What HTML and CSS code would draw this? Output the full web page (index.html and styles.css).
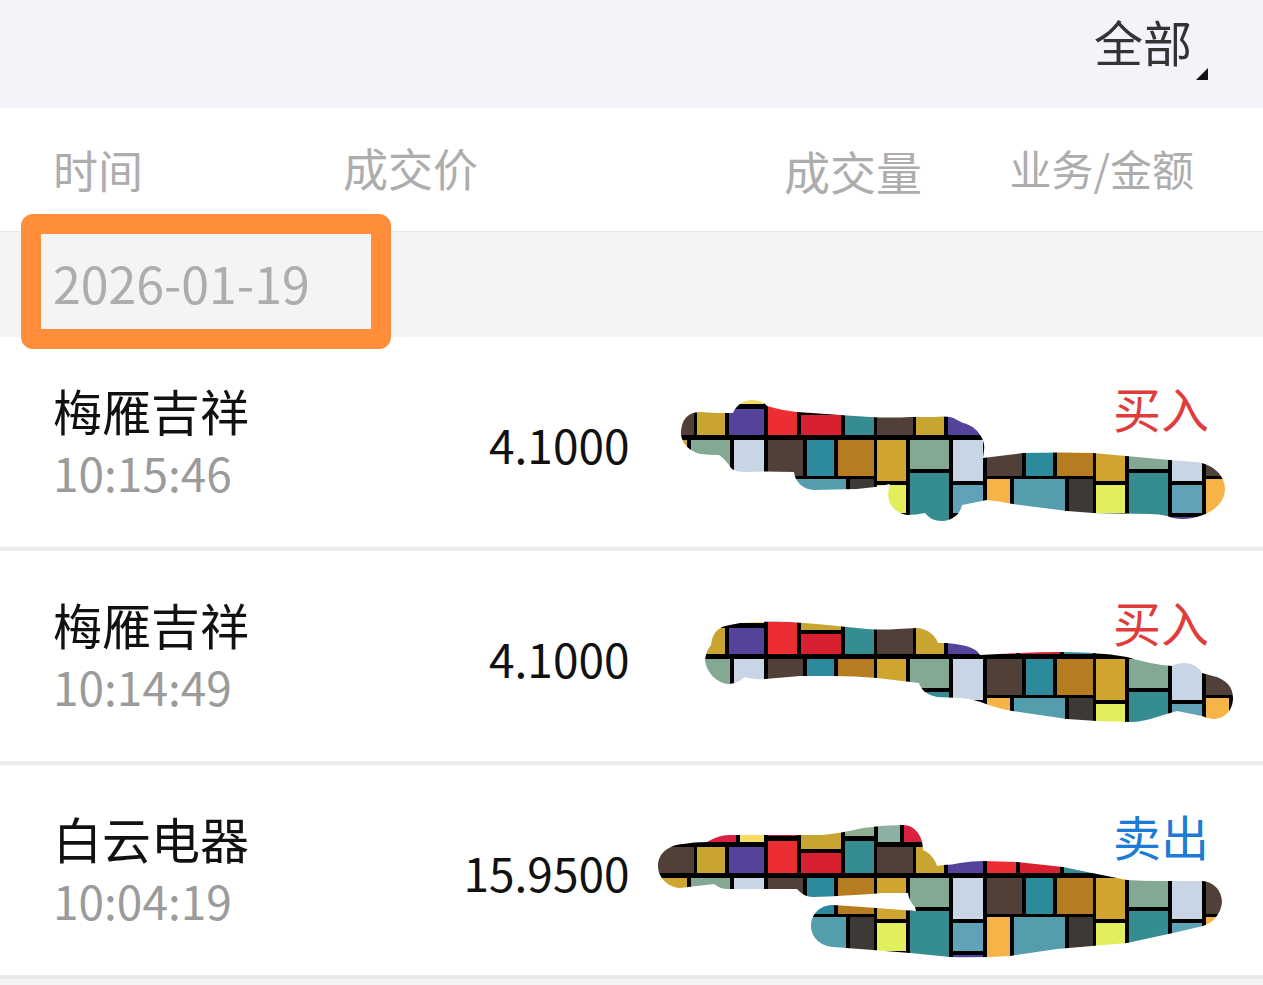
FILE: index.html
```html
<!DOCTYPE html>
<html lang="zh-CN">
<head>
<meta charset="utf-8">
<meta name="viewport" content="width=device-width, initial-scale=1">
<title>成交记录</title>
<link rel="stylesheet" href="styles.css">
</head>
<body>
<header class="topbar">
  <label class="filter">
    <select class="filter-select" aria-label="筛选">
      <option>全部</option>
    </select>
    <svg class="filter-mark" viewBox="0 0 12 12" aria-hidden="true"><path d="M12 0V12H0Z"/></svg>
  </label>
</header>

<svg class="defs" aria-hidden="true">
  <defs>
    <pattern id="mosaic" patternUnits="userSpaceOnUse" x="657" y="377" width="219" height="219">
      <rect width="219" height="219" fill="#000"/>
      <rect x="2" y="0" width="22" height="27" fill="#8cb0a1"/>
      <rect x="28" y="0" width="51" height="27" fill="#db2140"/>
      <rect x="83" y="0" width="24" height="27" fill="#f2dc66"/>
      <rect x="111" y="0" width="29" height="21" fill="#b81f3c"/>
      <rect x="144" y="0" width="40" height="34" fill="#c8a431"/>
      <rect x="188" y="0" width="29" height="21" fill="#8fae90"/>
      <rect x="1" y="32" width="36" height="26" fill="#504038"/>
      <rect x="40" y="32" width="28" height="26" fill="#c8a431"/>
      <rect x="72" y="32" width="35" height="26" fill="#54429b"/>
      <rect x="111" y="26" width="29" height="32" fill="#ec2e33"/>
      <rect x="144" y="38" width="40" height="20" fill="#d92030"/>
      <rect x="188" y="26" width="29" height="32" fill="#358d92"/>
      <rect x="1" y="63" width="29" height="41" fill="#cfa52f"/>
      <rect x="34" y="63" width="39" height="29" fill="#83a893"/>
      <rect x="77" y="63" width="30" height="41" fill="#c8d5e4"/>
      <rect x="111" y="63" width="35" height="36" fill="#504038"/>
      <rect x="150" y="63" width="27" height="36" fill="#2d899c"/>
      <rect x="181" y="63" width="36" height="36" fill="#b57d20"/>
      <rect x="1" y="108" width="29" height="28" fill="#e2ee5b"/>
      <rect x="34" y="96" width="39" height="60" fill="#358d92"/>
      <rect x="77" y="108" width="30" height="28" fill="#60a3b8"/>
      <rect x="77" y="140" width="30" height="20" fill="#54429b"/>
      <rect x="111" y="102" width="23" height="58" fill="#f6b347"/>
      <rect x="138" y="102" width="51" height="58" fill="#549dac"/>
      <rect x="193" y="102" width="24" height="58" fill="#3f3936"/>
    </pattern>
  </defs>
</svg>

<table class="trades">
  <colgroup>
    <col class="col-time"><col class="col-price"><col class="col-volume"><col class="col-kind">
  </colgroup>
  <thead>
    <tr>
      <th class="head-time" scope="col">时间</th>
      <th class="head-price" scope="col">成交价</th>
      <th class="head-volume" scope="col">成交量</th>
      <th class="head-kind" scope="col">业务/金额</th>
    </tr>
  </thead>
  <tbody>
    <tr>
      <th class="date" colspan="4" scope="rowgroup">2026-01-19<span class="date-frame"></span></th>
    </tr>
    <tr class="trade">
      <td class="stock"><div class="name">梅雁吉祥</div><div class="time">10:15:46</div></td>
      <td class="price">4.1000</td>
      <td></td>
      <td class="kind buy">买入
        <svg class="mask" viewBox="650 337 590 214" aria-hidden="true"><path fill="url(#mosaic)" d="M681 433C681 421 687 412 700 412C710 413 722 413 733 413C737 404 744 400 752 400C759 400 764 402 767 406C777 409 787 411 797 412L840 415L870 417Q890 418 910 417H933Q945 416 950 417C955 418 958 421 963 423C977 426 986 440 984 450L983 458L1023 453Q1058 452 1093 453L1170 460L1195 462C1212 463 1225 475 1225 489C1225 502 1214 511 1203 515C1189 520 1177 520 1167 516Q1159 514 1150 514L1093 513L1067 511L1013 504Q998 501 987 500L962 505C961 512 954 521 942 521C934 521 929 518 925 513Q917 515 907 515C890 512 885 498 890 484Q874 488 857 489L813 490C803 489 795 482 794 472Q763 471 746 472C739 472 734 471 731 468Q726 460 719 455Q709 455 700 454C690 451 681 444 681 433Z"/></svg>
      </td>
    </tr>
    <tr class="trade">
      <td class="stock"><div class="name">梅雁吉祥</div><div class="time">10:14:49</div></td>
      <td class="price">4.1000</td>
      <td></td>
      <td class="kind buy">买入
        <svg class="mask" viewBox="650 551 590 214" aria-hidden="true"><path fill="url(#mosaic)" d="M705 660Q706 651 711 645C712 635 717 628 725 626L740 623Q765 621 790 622L817 624L867 629Q883 630 897 629L917 628C928 629 935 635 938 643L947 643Q957 644 966 646Q977 649 980 655L1020 653Q1058 651 1093 653Q1111 654 1127 657Q1149 664 1172 666C1181 661 1196 662 1202 673L1213 676C1226 679 1233 687 1233 698C1233 710 1225 719 1213 719Q1208 719 1202 716L1177 711L1160 716Q1143 722 1130 722L1097 721L1067 719L1012 711Q997 708 986 704Q974 699 960 698L937 697C927 695 921 690 919 683L877 678Q855 676 833 676H800L765 679Q753 680 745 677Q737 684 728 684C717 683 706 672 705 660Z"/></svg>
      </td>
    </tr>
    <tr class="trade">
      <td class="stock"><div class="name">白云电器</div><div class="time">10:04:19</div></td>
      <td class="price">15.9500</td>
      <td></td>
      <td class="kind sell">卖出
        <svg class="mask" viewBox="650 765 590 214" aria-hidden="true"><path fill="url(#mosaic)" d="M658 866C658 853 669 845 683 844Q694 842 707 842C714 838 721 835 730 835H823Q842 833 863 828Q883 825 903 825C915 825 923 836 923 850C930 853 935 859 937 866L943 865Q952 865 960 863Q972 861 983 861L1017 862L1063 867L1097 874L1127 880Q1142 881 1157 881H1203C1214 882 1222 891 1222 902C1221 914 1213 923 1203 926L1173 933L1127 943L1057 949L1010 956Q979 958 950 957L910 953L873 950L833 947C820 946 811 937 811 926C811 914 820 905 833 905L863 907L916 911L915 907Q909 901 908 893L883 893Q843 896 813 897C805 897 801 893 797 889H728C722 889 718 887 714 884L680 888C667 887 658 877 658 866Z"/></svg>
      </td>
    </tr>
  </tbody>
</table>
</body>
</html>
```
FILE: styles.css
```css
* {
  box-sizing: border-box;
}

body {
  margin: 0;
  background: #f4f4f4;
  font-family: "Noto Sans CJK SC", sans-serif;
  color: #111;
}

.topbar {
  display: flex;
  justify-content: flex-end;
  height: 108px;
  padding: 5px 55px 0 0;
  background: #f3f4f9;
}

.filter {
  position: relative;
  height: 75px;
  padding-right: 15px;
}

.filter-select {
  appearance: none;
  height: 72px;
  padding: 0;
  border: 0;
  background: none;
  color: #333;
  font: 400 49px/72px "Noto Sans CJK SC", sans-serif;
}

.filter-mark {
  position: absolute;
  right: 0;
  bottom: 0;
  width: 12px;
  height: 12px;
  fill: #111;
}

.defs {
  position: absolute;
  width: 0;
  height: 0;
}

.trades {
  width: 100%;
  table-layout: fixed;
  border-spacing: 0;
  background: #fff;
}

.col-time,
.col-kind {
  width: 27%;
}

.col-price,
.col-volume {
  width: 23%;
}

th,
td {
  padding: 0;
  font-weight: 400;
  text-align: left;
}

thead th {
  height: 124px;
  border-bottom: 1px solid #e4e5e8;
  color: #adadad;
  font-size: 45px;
  line-height: 64px;
}

thead .head-time {
  padding-left: 53px;
}

thead .head-price {
  padding: 0 0 4px 2px;
}

thead .head-volume {
  font-size: 46px;
  text-align: right;
}

thead .head-kind {
  padding: 0 69px 4px 0;
  font-size: 42px;
  text-align: right;
}

.date {
  position: relative;
  height: 105px;
  padding: 0 0 6px 53px;
  background: #f4f4f4;
  color: #adadad;
  font-size: 50px;
  line-height: 64px;
}

.date-frame {
  position: absolute;
  top: -18px;
  bottom: -12px;
  left: 21px;
  width: 370px;
  border: 20px solid #ff8d3a;
  border-radius: 12px;
}

.trade td {
  height: 214px;
  border-bottom: 4px solid #ebebeb;
}

.trade .stock {
  padding: 0 0 4px 53px;
}

.name {
  font-size: 49px;
  line-height: 64px;
}

.time {
  color: #9b9b9b;
  font-size: 46px;
  line-height: 60px;
}

.trade .price {
  padding: 4px 2px 0 0;
  font-size: 46px;
  text-align: right;
}

.trade .kind {
  position: relative;
  padding: 34px 54px 0 0;
  font-size: 48px;
  line-height: 72px;
  text-align: right;
  vertical-align: top;
}

.buy {
  color: #e03c3c;
}

.sell {
  color: #1b7bd6;
}

.mask {
  position: absolute;
  top: 0;
  right: 23px;
  width: 590px;
  height: 214px;
}
```
